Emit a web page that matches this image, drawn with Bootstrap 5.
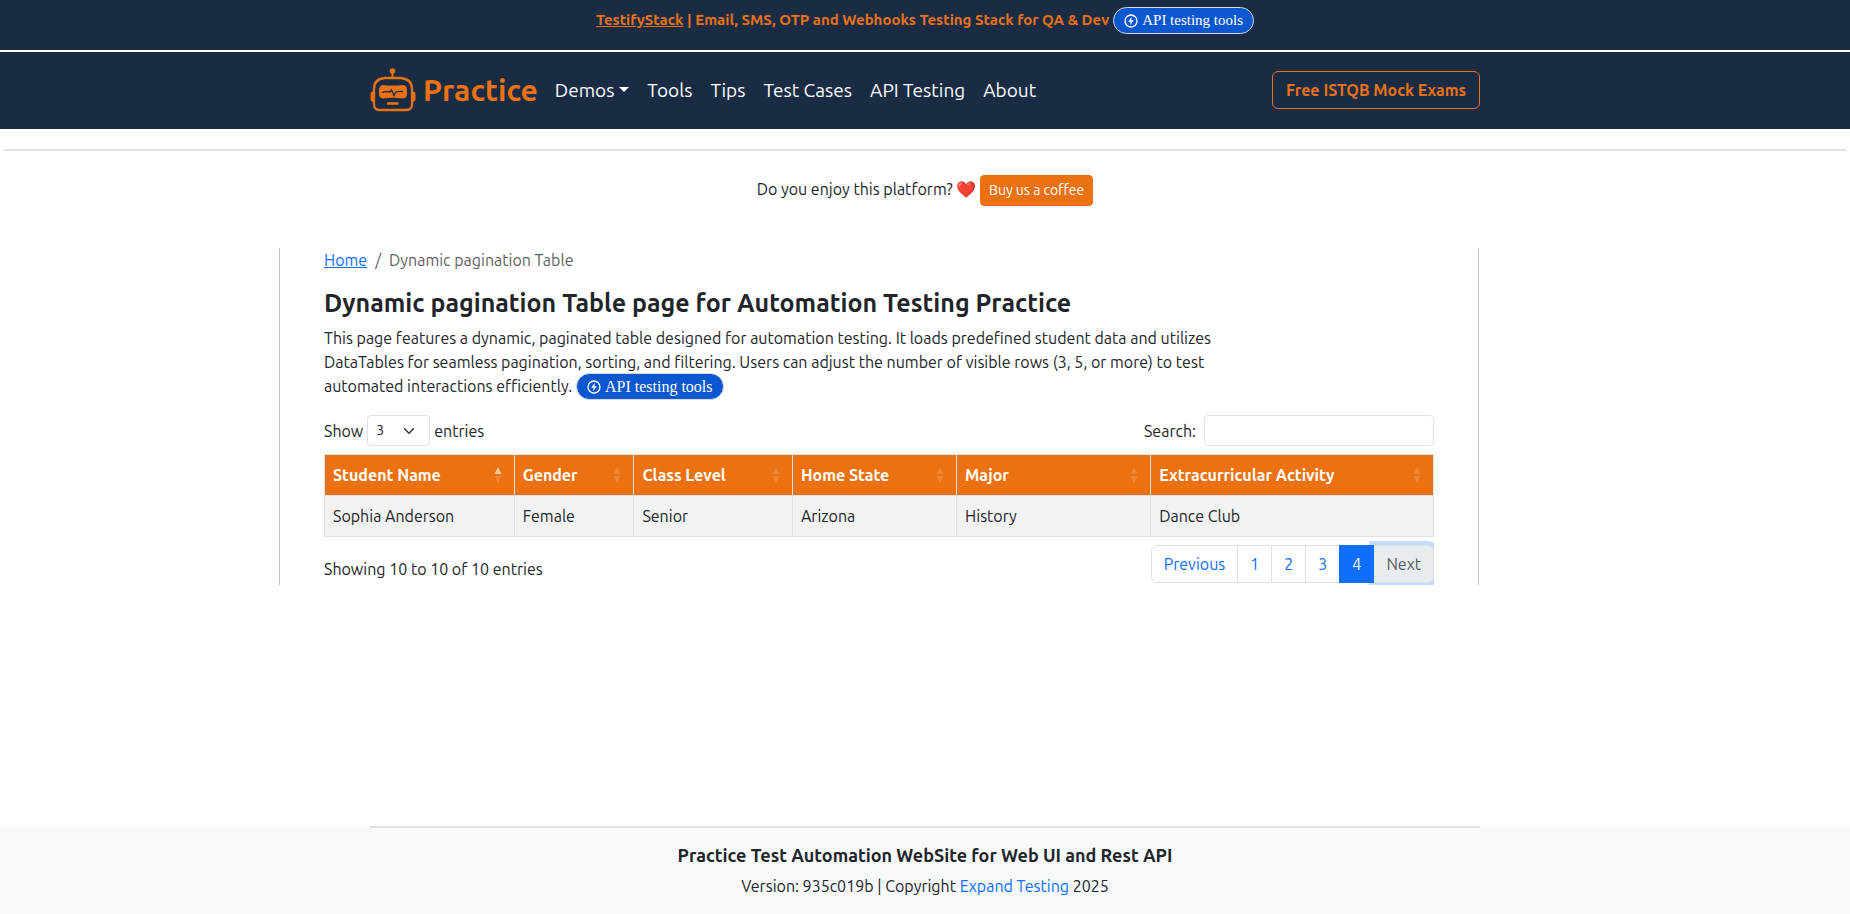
<!DOCTYPE html>
<html lang="en">
<head>
<meta charset="utf-8">
<meta name="viewport" content="width=device-width, initial-scale=1">
<title>Dynamic pagination Table</title>
<link href="https://cdn.jsdelivr.net/npm/bootstrap@5.3.0/dist/css/bootstrap.min.css" rel="stylesheet">
<style>
  body { font-family: Ubuntu, "Noto Sans", sans-serif; font-size: 16px; line-height: 24px; color: #212529; }
  .bg-navy { background: #192c44; }
  .text-brand { color: #ec7211; }
  .shell { width: 100%; max-width: 1140px; padding: 0 15px; margin: 0 auto; }
  .promo { font-size: 15px; height: 52px; border-bottom: 2px solid #fff; padding-top: 7px; }
  .api-pill { display: inline-flex; align-items: center; gap: 4px; height: 27px; padding: 0 10px; border: 1px solid #d3dae3; border-radius: 14px; background: #0b57d0; color: #fff; font: 16px "Liberation Serif", serif; text-decoration: none; vertical-align: middle; }
  .promo .api-pill { font-size: 15px; }
  .intro { margin-bottom: 17px; }
  .intro .api-pill { margin: -4px 0 -2px; }
  .site-nav { --bs-navbar-padding-y: 0; height: 77px; padding-bottom: 1px; }
  .site-nav .navbar-brand { gap: 7px; font-size: 30px; line-height: 42px; margin-right: 9px; }
  .site-nav .navbar-nav { gap: 2px; }
  .site-nav .nav-link { --bs-nav-link-color: #fff; color: #fff; font-size: 19px; line-height: 27px; }
  .btn-mock { --bs-btn-color: #ec7211; --bs-btn-border-color: #ec7211; --bs-btn-hover-bg: #ec7211; --bs-btn-hover-color: #fff; --bs-btn-line-height: 24px; --bs-btn-font-weight: 700; --bs-btn-padding-x: 13px; }
  .btn-coffee { --bs-btn-color: #fff; --bs-btn-bg: #ec7211; --bs-btn-border-color: #ec7211; --bs-btn-hover-bg: #d4650d; --bs-btn-hover-color: #fff; --bs-btn-font-size: 14px; --bs-btn-line-height: 21px; }
  .rule { border: 0; border-top: 2px solid #dee2e6; opacity: 1; margin: 0; }
  .support { padding: 24px 0 42px; }
  .layout { display: grid; grid-template-columns: minmax(0, 1200px) minmax(0, 92px); justify-content: center; }
  .panel { border: solid #c0c0c0; border-width: 0 1px; padding: 0 44px; }
  .panel h1 { font-size: 25px; line-height: 30px; font-weight: 600; }
  .panel .form-select, .panel .form-control { height: 31px; font-size: 14px; }
  .panel .form-select { width: 63px; }
  .panel .form-control { width: 230px; }
  .students { table-layout: fixed; }
  .students th { background: #ec7211; color: #fff; }
  .col-name { width: 17.1%; } .col-gender { width: 10.8%; } .col-level { width: 14.3%; }
  .col-state { width: 14.8%; } .col-major { width: 17.5%; }
  .sorter { color: #fff; opacity: .15; }
  .sorted .sorter { opacity: 1; }
  .sorted .sorter .off { opacity: .15; }
  .sorted .sorter .on { opacity: .6; }
  .pager { overflow: hidden; padding: 8px 0 2px 4px; }
  .page-item.disabled .page-link { box-shadow: 0 0 0 4px rgba(13,110,253,.25); }
  .page-foot { background: #f8f9fb; }
  .page-foot h2 { font-size: 18px; line-height: 22px; font-weight: 600; }
</style>
</head>
<body class="d-flex flex-column min-vh-100">
<header>
  <div class="promo bg-navy text-brand fw-bold d-flex justify-content-center align-items-start gap-1">
    <span class="pt-1 lh-sm"><a href="#" class="text-brand">TestifyStack</a> | Email, SMS, OTP and Webhooks Testing Stack for QA &amp; Dev</span>
    <a href="#" class="api-pill"><svg width="14" height="14" viewBox="0 0 14 14" aria-hidden="true"><circle cx="7" cy="7" r="6" fill="none" stroke="#fff" stroke-width="1.3"/><path d="M7.8 2.8 4.2 7.7h2.4l-.5 3.6 3.7-5H7.3z" fill="#fff"/></svg>API testing tools</a>
  </div>
  <nav class="navbar navbar-expand-lg site-nav bg-navy">
    <div class="shell d-flex align-items-center">
      <a class="navbar-brand d-flex align-items-center fw-bold text-brand py-0" href="#">
        <svg width="46" height="44" viewBox="0 0 46 44" fill="none" stroke="#ec7211" aria-hidden="true">
          <circle cx="22.5" cy="3" r="2.8" fill="#ec7211" stroke="none"/>
          <path d="M22.5 5v5" stroke-width="2"/>
          <path d="M14.5 10H30.5Q42 11 42 21V36.5Q42 42 36.5 42H9.5Q4 42 4 36.5V21Q4 11 14.5 10Z" stroke-width="2.3"/>
          <path d="M3.5 23.5H2.5Q.5 23.5 .5 26V31Q.5 34 3.5 34ZM42 23.5h1.5q2 0 2 2.5v5q0 3-3.500 3Z" fill="#ec7211" stroke="none"/>
          <path d="M13 17q9.500 1 20 0 4 .5 4 5v4q0 4-4 4.500-10-1.500-20 0-4-.5-4-4.500v-4q0-4.500 4-5Z" fill="#ec7211" stroke="none"/>
          <path d="M12 24.500q4-1.500 8-.5l1.500-2 2.500 5.500 2-3.500q3-1 7-.5" stroke="#192c44" stroke-width="1.300"/>
          <path d="M17 35.500h11.500" stroke-width="2.500"/>
        </svg>Practice</a>
      <ul class="navbar-nav me-auto">
        <li class="nav-item dropdown"><a class="nav-link dropdown-toggle" href="#" data-bs-toggle="dropdown">Demos</a></li>
        <li class="nav-item"><a class="nav-link" href="#">Tools</a></li>
        <li class="nav-item"><a class="nav-link" href="#">Tips</a></li>
        <li class="nav-item"><a class="nav-link" href="#">Test Cases</a></li>
        <li class="nav-item"><a class="nav-link" href="#">API Testing</a></li>
        <li class="nav-item"><a class="nav-link" href="#">About</a></li>
      </ul>
      <button type="button" class="btn btn-mock">Free ISTQB Mock Exams</button>
    </div>
  </nav>
</header>
<main>
  <div class="px-1 pt-3 mt-1"><hr class="rule"></div>
  <div class="support text-center">
    Do you enjoy this platform? ❤️
    <button type="button" class="btn btn-sm btn-coffee">Buy us a coffee</button>
  </div>
  <div class="layout">
    <section class="panel">
      <nav aria-label="breadcrumb">
        <ol class="breadcrumb">
          <li class="breadcrumb-item"><a href="#">Home</a></li>
          <li class="breadcrumb-item active" aria-current="page">Dynamic pagination Table</li>
        </ol>
      </nav>
      <h1>Dynamic pagination Table page for Automation Testing Practice</h1>
      <div class="row">
        <p class="intro col-lg-10">This page features a dynamic, paginated table designed for automation testing. It loads predefined student data and utilizes DataTables for seamless pagination, sorting, and filtering. Users can adjust the number of visible rows (3, 5, or more) to test automated interactions efficiently.
          <a href="#" class="api-pill"><svg width="14" height="14" viewBox="0 0 14 14" aria-hidden="true"><circle cx="7" cy="7" r="6" fill="none" stroke="#fff" stroke-width="1.3"/><path d="M7.8 2.8 4.2 7.7h2.4l-.5 3.6 3.7-5H7.3z" fill="#fff"/></svg>API testing tools</a></p>
      </div>
      <div class="d-flex justify-content-between mb-2">
        <label class="d-flex align-items-center gap-1">Show
          <select class="form-select form-select-sm"><option selected>3</option><option>5</option><option>10</option></select> entries</label>
        <label class="d-flex align-items-center gap-2">Search:
          <input type="search" class="form-control form-control-sm"></label>
      </div>
      <table class="table table-bordered table-striped students mb-0">
        <colgroup><col class="col-name"><col class="col-gender"><col class="col-level"><col class="col-state"><col class="col-major"><col></colgroup>
        <thead><tr id="head"></tr></thead>
        <tbody><tr><td>Sophia Anderson</td><td>Female</td><td>Senior</td><td>Arizona</td><td>History</td><td>Dance Club</td></tr></tbody>
      </table>
      <div class="d-flex justify-content-between align-items-end">
        <div class="pb-1">Showing 10 to 10 of 10 entries</div>
        <nav class="pager" aria-label="Table pages">
          <ul class="pagination mb-0">
            <li class="page-item"><a class="page-link" href="#">Previous</a></li>
            <li class="page-item"><a class="page-link" href="#">1</a></li>
            <li class="page-item"><a class="page-link" href="#">2</a></li>
            <li class="page-item"><a class="page-link" href="#">3</a></li>
            <li class="page-item active"><a class="page-link" href="#">4</a></li>
            <li class="page-item disabled"><a class="page-link" href="#">Next</a></li>
          </ul>
        </nav>
      </div>
    </section>
  </div>
</main>
<footer class="page-foot mt-auto text-center pb-3">
  <div class="shell"><hr class="rule">
    <h2 class="mt-3 mb-2">Practice Test Automation WebSite for Web UI and Rest API</h2>
    <div>Version: 935c019b | Copyright <a href="#" class="text-decoration-none">Expand Testing</a> 2025</div>
  </div>
</footer>
<script src="https://cdn.jsdelivr.net/npm/bootstrap@5.3.0/dist/js/bootstrap.bundle.min.js"></script>
<script>
  const titles = ['Student Name', 'Gender', 'Class Level', 'Home State', 'Major', 'Extracurricular Activity'];
  document.getElementById('head').innerHTML = titles.map((t, i) =>
    `<th scope="col" class="${i ? '' : 'sorted'}"><div class="d-flex justify-content-between align-items-center text-nowrap">${t}
      <svg class="sorter me-1" width="8" height="18" viewBox="0 0 8 18" fill="currentColor" aria-hidden="true"><path class="on" d="M4 1 7.5 8H.5z"/><path class="off" d="M4 17 .5 10h7z"/></svg></div></th>`).join('');
</script>
</body>
</html>
